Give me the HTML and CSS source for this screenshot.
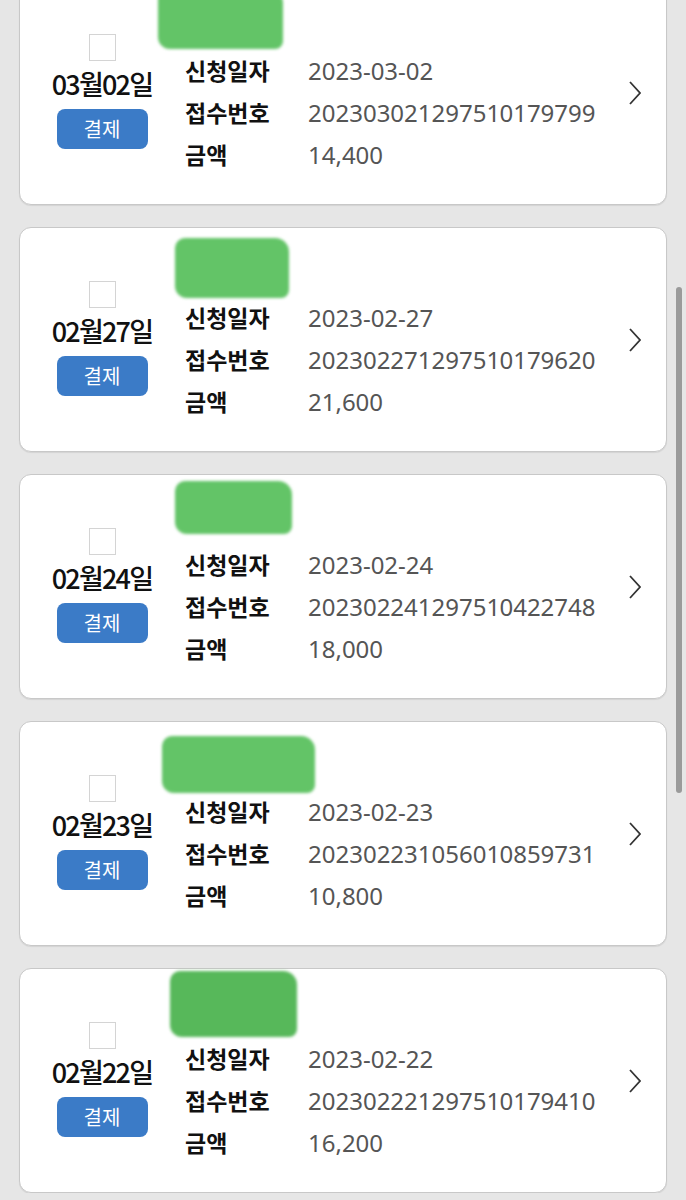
FILE: index.html
```html
<!DOCTYPE html>
<html lang="ko">
<head>
    <meta charset="UTF-8">
    <title>결제 내역</title>
    <link rel="stylesheet" href="styles.css">
</head>
<body>
<div class="list">
    <div class="item">
        <div class="item-left">
            <span class="check"></span>
            <div class="item-date">03월02일</div>
            <button class="pay-btn">결제</button>
        </div>
        <div class="item-info">
            <div class="item-name"><span class="mask mask-1"></span></div>
            <div class="info-row"><span class="info-label">신청일자</span><span class="info-value">2023-03-02</span></div>
            <div class="info-row"><span class="info-label">접수번호</span><span class="info-value">20230302129751 0179799</span></div>
            <div class="info-row"><span class="info-label">금액</span><span class="info-value">14,400</span></div>
        </div>
        <svg class="chevron" viewBox="0 0 12 24"><polyline points="1,1 11,12 1,23"/></svg>
    </div>

    <div class="item">
        <div class="item-left">
            <span class="check"></span>
            <div class="item-date">02월27일</div>
            <button class="pay-btn">결제</button>
        </div>
        <div class="item-info">
            <div class="item-name"><span class="mask mask-2"></span></div>
            <div class="info-row"><span class="info-label">신청일자</span><span class="info-value">2023-02-27</span></div>
            <div class="info-row"><span class="info-label">접수번호</span><span class="info-value">20230227129751 0179620</span></div>
            <div class="info-row"><span class="info-label">금액</span><span class="info-value">21,600</span></div>
        </div>
        <svg class="chevron" viewBox="0 0 12 24"><polyline points="1,1 11,12 1,23"/></svg>
    </div>

    <div class="item">
        <div class="item-left">
            <span class="check"></span>
            <div class="item-date">02월24일</div>
            <button class="pay-btn">결제</button>
        </div>
        <div class="item-info">
            <div class="item-name"><span class="mask mask-3"></span></div>
            <div class="info-row"><span class="info-label">신청일자</span><span class="info-value">2023-02-24</span></div>
            <div class="info-row"><span class="info-label">접수번호</span><span class="info-value">20230224129751 0422748</span></div>
            <div class="info-row"><span class="info-label">금액</span><span class="info-value">18,000</span></div>
        </div>
        <svg class="chevron" viewBox="0 0 12 24"><polyline points="1,1 11,12 1,23"/></svg>
    </div>

    <div class="item">
        <div class="item-left">
            <span class="check"></span>
            <div class="item-date">02월23일</div>
            <button class="pay-btn">결제</button>
        </div>
        <div class="item-info">
            <div class="item-name"><span class="mask mask-4"></span></div>
            <div class="info-row"><span class="info-label">신청일자</span><span class="info-value">2023-02-23</span></div>
            <div class="info-row"><span class="info-label">접수번호</span><span class="info-value">20230223105601 0859731</span></div>
            <div class="info-row"><span class="info-label">금액</span><span class="info-value">10,800</span></div>
        </div>
        <svg class="chevron" viewBox="0 0 12 24"><polyline points="1,1 11,12 1,23"/></svg>
    </div>

    <div class="item">
        <div class="item-left">
            <span class="check"></span>
            <div class="item-date">02월22일</div>
            <button class="pay-btn">결제</button>
        </div>
        <div class="item-info">
            <div class="item-name"><span class="mask mask-5"></span></div>
            <div class="info-row"><span class="info-label">신청일자</span><span class="info-value">2023-02-22</span></div>
            <div class="info-row"><span class="info-label">접수번호</span><span class="info-value">20230222129751 0179410</span></div>
            <div class="info-row"><span class="info-label">금액</span><span class="info-value">16,200</span></div>
        </div>
        <svg class="chevron" viewBox="0 0 12 24"><polyline points="1,1 11,12 1,23"/></svg>
    </div>
</div>
<div class="scrollbar"></div>
</body>
</html>
```

FILE: styles.css
```css
body {
    margin: 0;
    background: #e6e6e6;
    font-family: "Noto Sans CJK KR", "Noto Sans", sans-serif;
    color: #111;
}

.list {
    margin-top: -20px;
    padding: 0 19px;

    display: flex;
    flex-direction: column;
    gap: 22px;
}

.item {
    height: 225px;
    box-sizing: border-box;
    padding: 8px 0 0 20px;

    display: flex;
    flex-direction: row;

    background: #fff;
    border: 1px solid #c8c8c8;
    border-radius: 12px;
    box-shadow: 0 1px 1px rgba(0, 0, 0, 0.08);
}

.item-left {
    width: 124px;
    margin-top: -10px;
    align-self: center;

    display: flex;
    flex-direction: column;
    align-items: center;
}

.check {
    width: 25px;
    height: 25px;
    border: 1px solid #d4d4d4;
    background: #fff;
}

.item-date {
    margin-top: 7px;
    height: 32px;
    line-height: 32px;
    font-size: 27px;
    font-weight: 500;
    letter-spacing: -1.8px;
    white-space: nowrap;
}

.pay-btn {
    margin-top: 9px;
    width: 91px;
    height: 40px;
    padding: 0;

    border: none;
    border-radius: 8px;
    background: #3b7bc7;
    color: #fff;
    font-family: inherit;
    font-size: 20px;
    line-height: 40px;
}

.item-info {
    flex: 1;
    margin-left: 21px;

    display: flex;
    flex-direction: column;
}

.item-name {
    height: 60px;
    display: flex;
    align-items: flex-start;
}

.mask {
    display: block;
    background: #63c467;
    border-radius: 10px 14px 8px 12px;
    filter: blur(1.5px);
}

.mask-1 { margin: 0 0 0 -27px; width: 125px; height: 60px; }
.mask-2 { margin: 2px 0 0 -10px; width: 114px; height: 60px; }
.mask-3 { margin: -2px 0 0 -10px; width: 117px; height: 53px; }
.mask-4 { margin: 6px 0 0 -23px; width: 153px; height: 57px; }
.mask-5 { margin: -6px 0 0 -15px; width: 127px; height: 66px; background: #57b85a; }

.info-row {
    height: 42px;
    display: flex;
    align-items: center;
    white-space: nowrap;
}

.info-label {
    width: 123px;
    font-size: 23px;
    font-weight: 700;
}

.info-value {
    font-family: "Noto Sans", "Noto Sans CJK KR", sans-serif;
    font-size: 24px;
    color: #555;
    word-spacing: -7px;
}

.chevron {
    width: 12px;
    height: 24px;
    align-self: center;
    margin: -8px 25px 0 0;
}

.chevron polyline {
    fill: none;
    stroke: #333;
    stroke-width: 1.8;
}

.scrollbar {
    position: fixed;
    top: 287px;
    right: 4px;
    width: 6px;
    height: 506px;
    border-radius: 3px;
    background: #9a9a9a;
}
```
